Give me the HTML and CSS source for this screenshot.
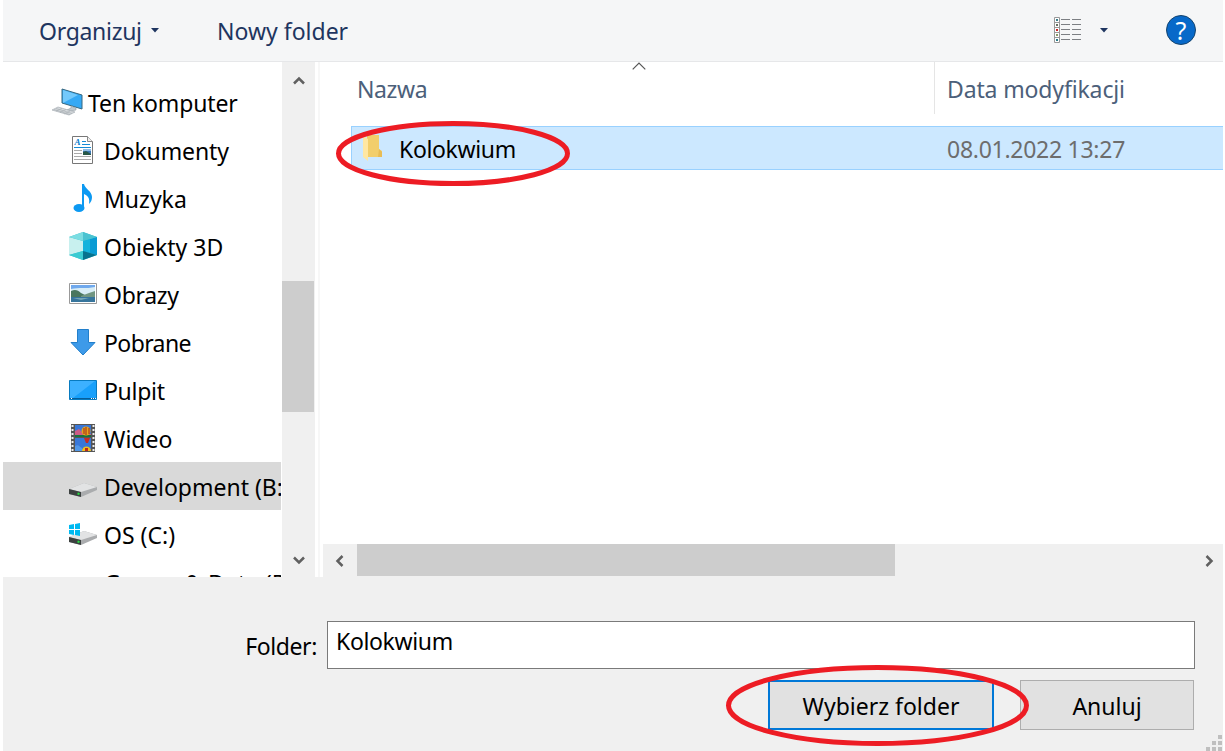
FILE: index.html
```html
<!DOCTYPE html>
<html lang="pl">
<head>
<meta charset="utf-8">
<title>Wybierz folder</title>
<link rel="stylesheet" href="styles.css">
</head>
<body>
<div class="dialog">
  <header class="toolbar">
    <div class="tool organize">Organizuj<svg class="caret" width="8" height="5" viewBox="0 0 8 5"><path d="M0 0h8L4 4.5z" fill="#1e3560"/></svg></div>
    <div class="tool new-folder">Nowy folder</div>
    <svg class="view-icon" width="28" height="27" viewBox="0 0 28 27">
      <path d="M.5.5h5v25h-5zM.5 5.500h5M.5 10.500h5M.5 15.500h5M.5 20.500h5" fill="#fff" stroke="#999"/>
      <path d="M2 2h2v2H2z" fill="#387d8a"/><path d="M2 7h2v2H2z" fill="#687060"/><path d="M2 12h2v2H2z" fill="#c22"/><path d="M2 17h2v2H2z" fill="#899a68"/><path d="M2 22h2v2H2z" fill="#287b89"/>
      <path d="M7 2.500h9M18 2.500h9M7 7.500h9M18 7.500h9M7 12.500h9M18 12.500h9M7 17.500h9M18 17.500h9M7 22.500h9M18 22.500h9" stroke="#7c7f83"/>
    </svg>
    <svg class="view-caret" width="8" height="5" viewBox="0 0 8 5"><path d="M0 0h8L4 4.500z" fill="#1e3560"/></svg>
    <div class="help">?</div>
  </header>

  <div class="body">
    <nav class="tree">
      <div class="node root">
        <svg width="32" height="30" viewBox="0 0 32 30">
          <path d="M10 2l20 6v14l-20-6z" fill="#35a9f5" stroke="#37677f"/>
          <path d="M11 3l15 5-15 8z" fill="#74c9fb"/>
          <path d="M19 19l5 2v2l-6 1-3-1 4-2z" fill="#bfc8ce" stroke="#8e9aa1" stroke-width=".6"/>
          <path d="M6 20l17 5-6 3L0 23z" fill="#d6dadd" stroke="#a8afb4" stroke-width=".7"/>
          <path d="M4 21.500l16 5M2 22.500l16 5M10 21.500l-6 2.500M14 22.500l-6 3M18 24l-6 3" stroke="#a4abb0" stroke-width=".6"/>
        </svg><span class="snug">Ten komputer</span>
      </div>
      <div class="node">
        <svg width="28" height="28" viewBox="0 0 28 28">
          <path d="M3.500.5h15l5 5v22h-20z" fill="#fff" stroke="#777"/><path d="M18.500.5v5h5" fill="#eee" stroke="#888"/>
          <text x="5.500" y="9" class="doc-letter">A</text>
          <path d="M13 5.500h4M13 8.500h8M5 11.500h17" stroke="#168bd5"/>
          <path d="M5 14.500h8M5 17.500h8M5 20.500h17M5 23.500h17" stroke="#aaa"/>
          <path d="M14 13h8v6h-8z" fill="#3c78b8"/><path d="M14 13h8v2h-8z" fill="#8fbde8"/><path d="M14 16l3-1 5 3v1h-8z" fill="#285847"/>
        </svg><span class="snug">Dokumenty</span>
      </div>
      <div class="node">
        <svg width="28" height="28" viewBox="0 0 28 28">
          <ellipse cx="10" cy="24" rx="5.500" ry="4" fill="#0c99f2"/>
          <path d="M13 0h2c1 5 8 7 8 13 0 3-1 5-3 7 1-6-1-8-5-10v14h-2z" fill="#0c99f2"/>
        </svg><span>Muzyka</span>
      </div>
      <div class="node">
        <svg width="28" height="28" viewBox="0 0 28 28">
          <path d="M0 5L14 0l14 5v18l-14 5-14-5z" fill="#38c0d0"/>
          <path d="M0 5l14 4v10L0 23z" fill="#c8f0ef"/><path d="M14 9l14-4v18l-14-4z" fill="#0a9bd4"/>
          <path d="M14 9l7-2v14l-7-2z" fill="#14b3dc"/>
          <path d="M0 5L14 0v9z" fill="#7bdde2"/><path d="M14 0l14 5-14 4z" fill="#4ac3d1"/>
          <path d="M0 23l14-4v9z" fill="#3bcbd2"/><path d="M14 19l14 4-14 5z" fill="#07728f"/>
        </svg><span>Obiekty 3D</span>
      </div>
      <div class="node">
        <svg width="28" height="28" viewBox="0 0 28 28">
          <path d="M.5 3.500h27v20H.5z" fill="#fff" stroke="#999"/>
          <path d="M2 5h24v17H2z" fill="#70a9ed"/><path d="M2 9c8-2 15 0 24-2v9H2z" fill="#d8edf6"/>
          <path d="M2 11c4-2 7-1 10 2l8 4H2z" fill="#49775f"/><path d="M12 16l8-3 6-2v6H12z" fill="#719682"/>
          <path d="M2 17h24v5H2z" fill="#37759c"/><path d="M4 18h16l-8 2z" fill="#75a7b7"/>
        </svg><span class="tight">Obrazy</span>
      </div>
      <div class="node">
        <svg width="28" height="28" viewBox="0 0 28 28"><path d="M8.500 1.500h11v13h6.500L14 27 2 14.500h6.500z" fill="#3d9ae9" stroke="#227fcb"/></svg><span class="tighter">Pobrane</span>
      </div>
      <div class="node">
        <svg width="28" height="28" viewBox="0 0 28 28"><path d="M.5 4.500h27v19H.5z" fill="#18a0fb" stroke="#087bc0"/><path d="M1 5h25L4 22H1z" fill="#3cb1ff"/><path d="M1 22.500h26" stroke="#075e99"/><path d="M2 22.500h1M22 22.500h1M24 22.500h1M26 22.500h1" stroke="#fff"/></svg><span class="tight">Pulpit</span>
      </div>
      <div class="node">
        <svg width="28" height="28" viewBox="0 0 28 28">
          <path d="M2 0h24v28H2z" fill="#555"/><path d="M3.500 1v27M24.500 1v27" stroke="#eee" stroke-width="2" stroke-dasharray="2 2"/>
          <path d="M6 1h16v12H6zM6 14h16v13H6z" fill="#3977d8"/>
          <path d="M6 7l4-2 4 4 8 1v3H6z" fill="#cc5c86"/><path d="M6 11h16v2H6z" fill="#16733b"/>
          <circle cx="17" cy="7" r="4.500" fill="#e7a51a"/><path d="M15 4v6M17 3v8M20 4v6" stroke="#9b251d"/>
          <path d="M15 14h6l-2 5h-2z" fill="#c52d23"/><path d="M13 27a4.500 4.500 0 0 1 9 0z" fill="#f2bf1d"/><path d="M16 24h3v3h-3z" fill="#bd291d"/><path d="M6 22c4-2 4 1 7 2v3H6z" fill="#5197e7"/>
        </svg><span>Wideo</span>
      </div>
      <div class="node selected">
        <svg width="28" height="28" viewBox="0 0 28 28"><path d="M0 17l15-6 13 4v3l-16 7-12-3z" fill="#aaacae"/><path d="M0 17l15-6 13 4-16 5z" fill="#e2e3e4"/><path d="M0 17l12 3v5L0 22z" fill="#3c4140"/><path d="M8.500 21.500l2 .5" stroke="#27e044" stroke-width="2"/></svg><span>Development (B:)</span>
      </div>
      <div class="node">
        <svg width="28" height="28" viewBox="0 0 28 28"><path d="M0 17l15-6 13 4v3l-16 7-12-3z" fill="#aaacae"/><path d="M0 17l15-6 13 4-16 5z" fill="#e2e3e4"/><path d="M0 17l12 3v5L0 22z" fill="#3c4140"/><path d="M8.500 21.500l2 .5" stroke="#27e044" stroke-width="2"/><path d="M0 5l5-1v5H0zM6 4l5-1v6H6zM0 10h5v5l-5-1zM6 10h5v6l-5-1z" fill="#00b9f1"/></svg><span>OS (C:)</span>
      </div>
      <div class="node"><i class="blank"></i><span>Games &amp; Data (D:)</span></div>
    </nav>

    <div class="vscroll">
      <svg class="up" width="12" height="9" viewBox="0 0 12 9"><path d="M1 7.500l5-5 5 5" fill="none" stroke="#606060" stroke-width="2.500"/></svg>
      <div class="vthumb"></div>
      <svg class="down" width="12" height="9" viewBox="0 0 12 9"><path d="M1 1.500l5 5 5-5" fill="none" stroke="#606060" stroke-width="2.500"/></svg>
    </div>
    <div class="splitter"></div>

    <main class="files">
      <div class="columns">
        <div class="name-col">Nazwa</div>
        <div class="date-col">Data modyfikacji</div>
        <svg class="sort" width="14" height="8" viewBox="0 0 14 8"><path d="M.7 7.300L7 1l6.300 6.300" fill="none" stroke="#555" stroke-width="1.200"/></svg>
      </div>
      <div class="file">
        <svg class="folder" width="20" height="27" viewBox="0 0 20 27"><path d="M4 0h12v14l3 2v6H4z" fill="#f2ce6b"/><path d="M16 14l3 3v5h-4z" fill="#e8bc55"/><path d="M0 1l5 3v22l-5-4z" fill="#ffe7a2"/></svg>
        <span class="file-name">Kolokwium</span><span class="file-date">08.01.2022 13:27</span>
      </div>
      <div class="hscroll">
        <svg width="9" height="12" viewBox="0 0 9 12"><path d="M7.500 1l-5 5 5 5" fill="none" stroke="#606060" stroke-width="2.500"/></svg>
        <div class="hthumb"></div>
        <svg class="right" width="9" height="12" viewBox="0 0 9 12"><path d="M1.500 1l5 5-5 5" fill="none" stroke="#606060" stroke-width="2.500"/></svg>
      </div>
    </main>
  </div>

  <footer class="footer">
    <div class="field"><label>Folder:</label><div class="input">Kolokwium</div></div>
    <div class="actions"><div class="button primary">Wybierz folder</div><div class="button cancel">Anuluj</div></div>
    <svg class="grip" width="16" height="16" viewBox="0 0 16 16"><path d="M12 0h4v4h-4zM6 6h4v4H6zM12 6h4v4h-4zM0 12h4v4H0zM6 12h4v4H6zM12 12h4v4h-4z" fill="#bfbfbf"/></svg>
  </footer>

  <svg class="marks" width="1225" height="751" viewBox="0 0 1225 751">
    <g fill="none" stroke="#ed1c24" stroke-width="5"><ellipse cx="453" cy="153.500" rx="114.500" ry="30"/><ellipse cx="877.500" cy="705.500" rx="149" ry="38"/></g>
  </svg>
</div>
</body>
</html>
```
FILE: styles.css
```css
* { box-sizing: border-box; }
body { margin: 0; background: #fff; overflow: hidden; font: 23px "Noto Sans", sans-serif; color: #000; }
svg { display: block; flex: none; }
.dialog { position: relative; display: flex; flex-direction: column; width: 1225px; height: 751px; padding: 0 2px 0 3px; white-space: nowrap; }
.toolbar { display: flex; align-items: center; height: 62px; flex: none; padding: 0 27px 0 36px; background: #f5f6f7; border-bottom: 1px solid #e6e7e9; color: #1e3560; }
.organize { display: flex; align-items: center; width: 178px; padding-top: 1px; letter-spacing: -.3px; }
.caret { margin: -2px 0 0 9px; }
.new-folder { padding-top: 1px; }
.view-icon { margin: 0 18px 0 auto; }
.view-caret { margin-right: 58px; }
.help { width: 30px; height: 30px; margin-top: -2px; border-radius: 50%; background: #0869c9; border: 1px solid #15446e; color: #fff; text-align: center; font-size: 25px; line-height: 28px; }
.body { display: flex; height: 515px; flex: none; }
.tree { width: 278px; padding-top: 16px; overflow: hidden; }
.node { display: flex; align-items: center; height: 48px; padding-left: 66px; gap: 7px; }
.node span { padding-top: 2px; }
.node .snug { letter-spacing: -.13px; }
.node .tight { letter-spacing: -.3px; }
.node .tighter { letter-spacing: -.6px; }
.root { padding-left: 49px; gap: 4px; }
.selected { background: #d9d9d9; }
.blank { width: 28px; flex: none; }
.doc-letter { font: italic bold 9px "Liberation Serif", serif; fill: #087bcb; }
.vscroll { display: flex; flex-direction: column; align-items: center; width: 33px; margin-left: 1px; padding: 14px 0 12px; background: #f0f0f0; }
.vthumb { width: 32px; height: 131px; margin: 196px 1px 0 0; background: #cdcdcd; }
.down { margin-top: auto; }
.splitter { width: 2px; margin-left: 3px; background: #f7f7f7; }
.files { display: flex; flex-direction: column; flex: 1; padding-left: 3px; }
.columns { position: relative; display: flex; height: 52px; line-height: 54px; padding-left: 34px; color: #4c607a; }
.name-col { width: 577px; letter-spacing: -.4px; }
.date-col { flex: 1; padding-left: 12px; border-left: 1px solid #e5e5e5; letter-spacing: -.14px; }
.sort { position: absolute; left: 309px; top: 0; }
.file { display: flex; align-items: center; height: 44px; margin: 12px 0 0 28px; padding-left: 11px; background: #cce8ff; border: 1px solid #99d1ff; border-width: 1px 0 1px 1px; }
.file span { padding-top: 2px; }
.file-name { width: 548px; margin-left: 16px; letter-spacing: -.35px; }
.file-date { color: #6d6d6d; letter-spacing: -.27px; }
.hscroll { display: flex; align-items: center; height: 33px; margin-top: auto; padding: 0 9px 0 12px; background: #f0f0f0; }
.hthumb { width: 538px; height: 32px; margin: 0 0 1px 13px; background: #cdcdcd; }
.right { margin-left: auto; }
.footer { position: relative; flex: 1; background: #f0f0f0; padding-top: 44px; }
.field { display: flex; height: 48px; padding-right: 28px; }
.field label { width: 324px; padding-right: 10px; text-align: right; line-height: 50px; letter-spacing: -.4px; }
.input { flex: 1; height: 48px; padding-left: 8px; background: #fff; border: 1px solid #7a7a7a; line-height: 39px; letter-spacing: -.35px; }
.actions { display: flex; justify-content: flex-end; gap: 26px; margin: 11px 29px 0 0; }
.button { height: 50px; background: #e1e1e1; border: 1px solid #adadad; text-align: center; line-height: 50px; }
.primary { width: 226px; border: 2px solid #0078d7; line-height: 48px; }
.cancel { width: 174px; }
.grip { position: absolute; right: 1px; bottom: 0; }
.marks { position: absolute; left: 0; top: 0; pointer-events: none; }
```
